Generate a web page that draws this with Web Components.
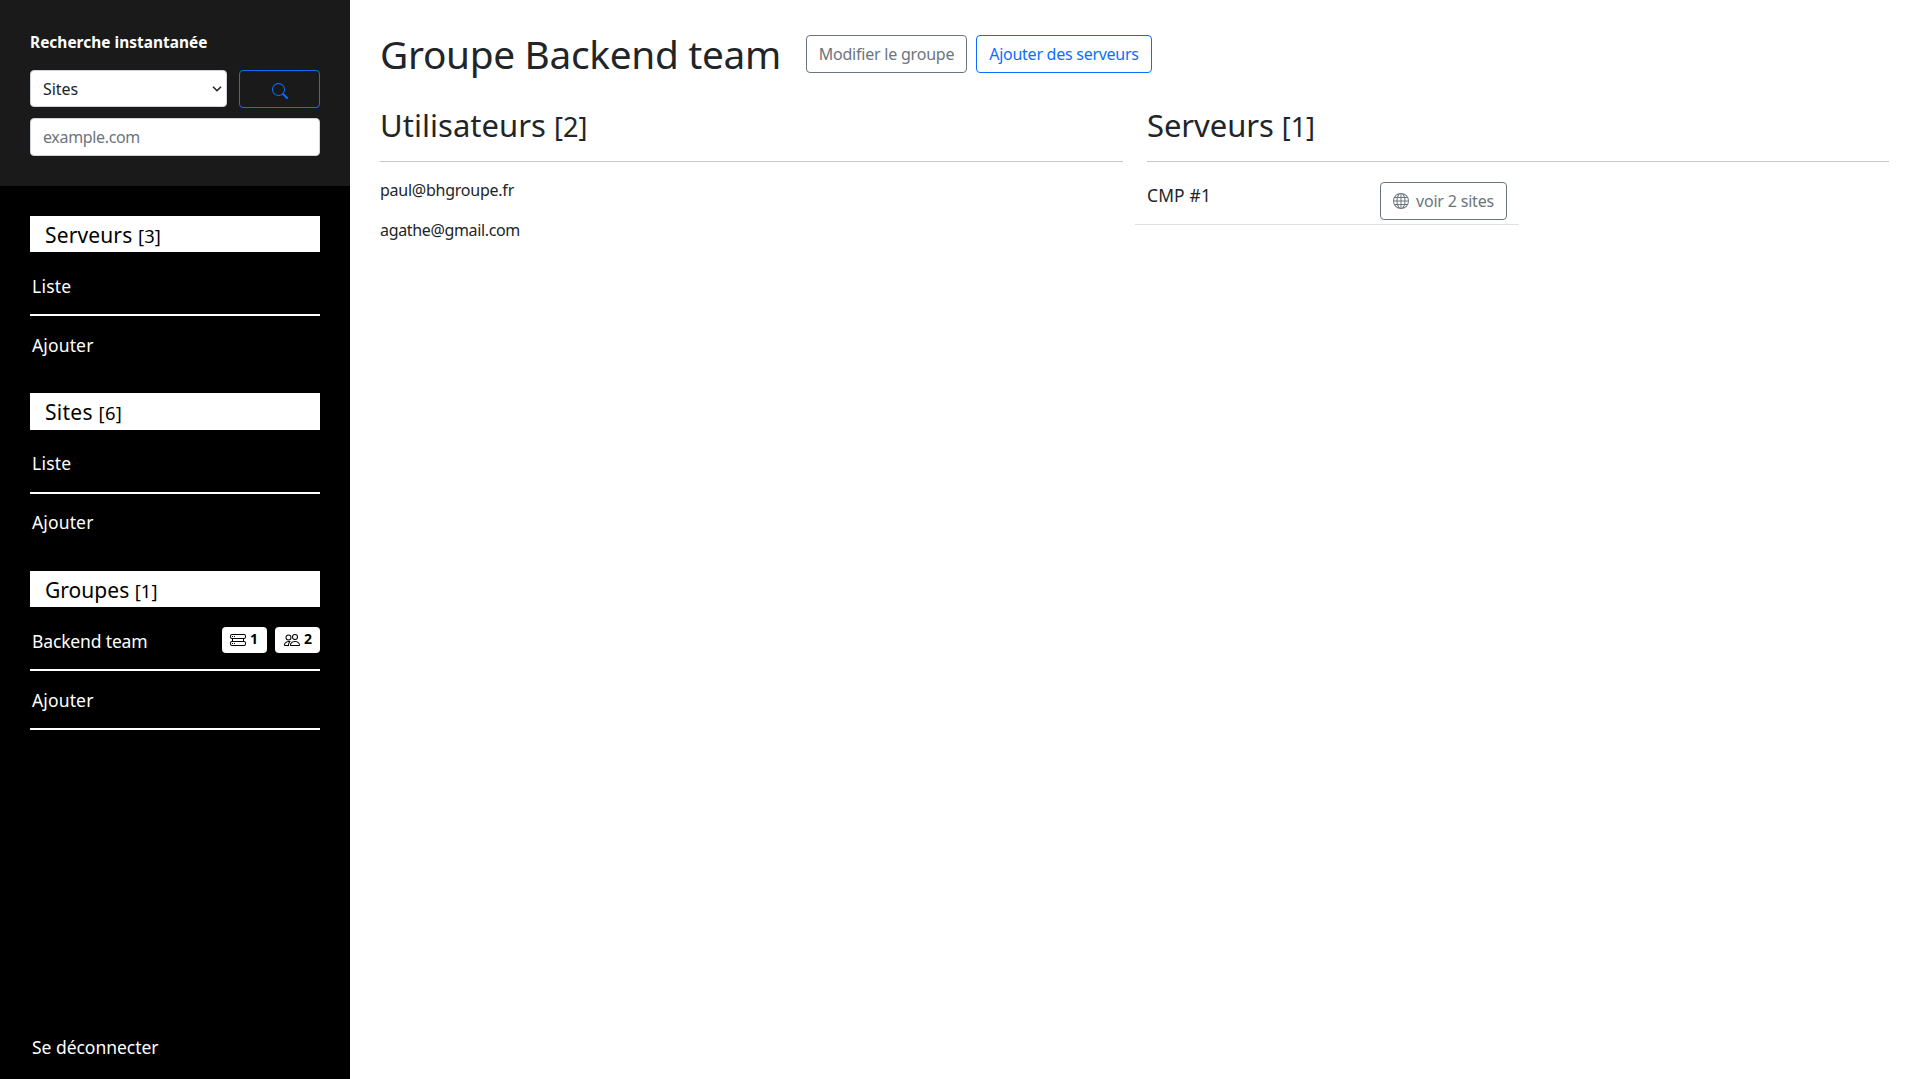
<!DOCTYPE html>
<html lang="fr">
<head>
<meta charset="utf-8">
<title>Groupe Backend team</title>
<style>
html,body{margin:0;height:100%}
body{font:16px/24px "Noto Sans","Open Sans",sans-serif;color:#212529;background:#fff;overflow:hidden}
</style>
</head>
<body>
<app-shell>
  <side-bar slot="side"></side-bar>
  <group-page></group-page>
</app-shell>
<script>
const ICONS = {
  search: '<path d="M11.742 10.344a6.5 6.5 0 1 0-1.397 1.398h-.001c.03.04.062.078.098.115l3.85 3.85a1 1 0 0 0 1.415-1.414l-3.85-3.85a1.007 1.007 0 0 0-.115-.1zM12 6.5a5.5 5.5 0 1 1-11 0 5.5 5.5 0 0 1 11 0z"/>',
  stack: '<path d="M2 2h12a2 2 0 0 1 2 2v1a2 2 0 0 1-2 2v2a2 2 0 0 1 2 2v1a2 2 0 0 1-2 2H2a2 2 0 0 1-2-2v-1a2 2 0 0 1 2-2V7a2 2 0 0 1-2-2V4a2 2 0 0 1 2-2zM2 3a1 1 0 0 0-1 1v1a1 1 0 0 0 1 1h12a1 1 0 0 0 1-1V4a1 1 0 0 0-1-1zM3 7v2h10V7zm-1 3a1 1 0 0 0-1 1v1a1 1 0 0 0 1 1h12a1 1 0 0 0 1-1v-1a1 1 0 0 0-1-1z" fill-rule="evenodd"/><path d="M2 4h1v1H2zM4 4h1v1H4zM2 11h1v1H2zM4 11h1v1H4z"/>',
  people: '<path d="M15 14s1 0 1-1-1-4-5-4-5 3-5 4 1 1 1 1h8zm-7.978-1A.261.261 0 0 1 7 12.996c.001-.264.167-1.03.76-1.72C8.312 10.629 9.282 10 11 10c1.717 0 2.687.63 3.24 1.276.593.69.758 1.457.76 1.72l-.008.002a.274.274 0 0 1-.014.002H7.022zM11 7a2 2 0 1 0 0-4 2 2 0 0 0 0 4zm3-2a3 3 0 1 1-6 0 3 3 0 0 1 6 0zM6.936 9.28a5.88 5.88 0 0 0-1.23-.247A7.35 7.35 0 0 0 5 9c-4 0-5 3-5 4 0 .667.333 1 1 1h4.216A2.238 2.238 0 0 1 5 13c0-1.01.377-2.042 1.09-2.904.243-.294.526-.569.846-.816zM4.92 10A5.493 5.493 0 0 0 4 13H1c0-.26.164-1.03.76-1.724.545-.636 1.492-1.256 3.16-1.275zM1.5 5.5a3 3 0 1 1 6 0 3 3 0 0 1-6 0zm3-2a2 2 0 1 0 0 4 2 2 0 0 0 0-4z"/>',
  globe: '<path d="M0 8a8 8 0 1 1 16 0A8 8 0 0 1 0 8zm7.5-6.923c-.67.204-1.335.82-1.887 1.855A7.97 7.97 0 0 0 5.145 4H7.5V1.077zM4.09 4a9.267 9.267 0 0 1 .64-1.539 6.7 6.7 0 0 1 .597-.933A7.025 7.025 0 0 0 2.255 4H4.09zm-.582 3.5c.03-.877.138-1.718.312-2.5H1.674a6.958 6.958 0 0 0-.656 2.5h2.49zM4.847 5a12.5 12.5 0 0 0-.338 2.5H7.5V5H4.847zM8.5 5v2.5h2.99a12.495 12.495 0 0 0-.337-2.5H8.5zM4.51 8.5a12.5 12.5 0 0 0 .337 2.5H7.5V8.5H4.51zm3.99 0V11h2.653c.187-.765.306-1.608.338-2.5H8.5zM5.145 12c.138.386.295.744.468 1.068.552 1.035 1.218 1.65 1.887 1.855V12H5.145zm.182 2.472a6.696 6.696 0 0 1-.597-.933A9.268 9.268 0 0 1 4.09 12H2.255a7.024 7.024 0 0 0 3.072 2.472zM3.82 11a13.652 13.652 0 0 1-.312-2.5h-2.49c.062.89.291 1.733.656 2.5H3.82zm6.853 3.472A7.024 7.024 0 0 0 13.745 12H11.91a9.27 9.27 0 0 1-.64 1.539 6.688 6.688 0 0 1-.597.933zM8.5 12v2.923c.67-.204 1.335-.82 1.887-1.855.173-.324.33-.682.468-1.068H8.5zm3.68-1h2.146c.365-.767.594-1.61.656-2.5h-2.49a13.65 13.65 0 0 1-.312 2.5zm2.802-3.5a6.959 6.959 0 0 0-.656-2.5H12.18c.174.782.282 1.623.312 2.5h2.49zM11.27 2.461c.247.464.462.98.64 1.539h1.835a7.024 7.024 0 0 0-3.072-2.472c.218.284.418.598.597.933zM10.855 4a7.966 7.966 0 0 0-.468-1.068C9.835 1.897 9.17 1.282 8.5 1.077V4h2.355z"/>'
};
function define(name, html) {
  const t = document.createElement('template');
  t.innerHTML = html;
  customElements.define(name, class extends HTMLElement {
    constructor() { super(); this.attachShadow({mode: 'open'}).append(t.content.cloneNode(true)); }
  });
}

define('app-shell', `<style>
:host{display:flex;height:100vh}
::slotted([slot=side]){flex:0 0 350px}
</style><slot name="side"></slot><slot></slot>`);

define('side-bar', `<style>
:host{display:flex;flex-direction:column;background:#000;color:#fff;box-sizing:border-box}
.logout{margin-top:auto;padding:0 32px 20px;font-size:17.5px;line-height:24px}
nav{padding:30px 30px 0}
nav-group + nav-group{margin-top:18px}
</style>
<search-box></search-box>
<nav>
<nav-group><text-run slot="title" w="116">Serveurs <small>[3]</small></text-run>
<nav-link><text-run w="39.5">Liste</text-run></nav-link>
<nav-link last><text-run w="61.5">Ajouter</text-run></nav-link></nav-group>
<nav-group tall><text-run slot="title" w="77">Sites <small>[6]</small></text-run>
<nav-link raised><text-run w="39.5">Liste</text-run></nav-link>
<nav-link last raised><text-run w="61.5">Ajouter</text-run></nav-link></nav-group>
<nav-group><text-run slot="title" w="112.5">Groupes <small>[1]</small></text-run>
<nav-link><text-run w="115.5">Backend team</text-run><count-badge slot="end" icon="stack">1</count-badge><count-badge slot="end" icon="people">2</count-badge></nav-link>
<nav-link><text-run w="61.5">Ajouter</text-run></nav-link></nav-group>
</nav>
<div class="logout"><text-run w="126.5">Se déconnecter</text-run></div>`);

define('search-box', `<style>
:host{display:block;box-sizing:border-box;height:186px;padding:31px 30px 30px;background:#1a1a1a}
.t{font-weight:700;font-size:15.4px;line-height:24px;margin-bottom:15px}
.row{display:flex;gap:12px;align-items:flex-start;margin-bottom:10px}
.f{box-sizing:border-box;border:1px solid #ced4da;border-radius:4px;background:#fff;color:#212529;padding:0 12px;font-size:16px;line-height:35px}
.s{width:197px;height:37px;display:flex;justify-content:space-between;padding:1px 4px 0 12px;align-items:center}
.s svg{display:block}
button{box-sizing:border-box;width:81px;height:38px;border:1px solid #0d6efd;border-radius:4px;background:none;color:#0d6efd;padding:3px 0 0;display:flex;align-items:center;justify-content:center}
.i{height:38px;color:#6c757d;line-height:36px}
</style>
<div class="t"><text-run w="177.5">Recherche instantanée</text-run></div>
<div class="row"><div class="f s" role="combobox"><text-run w="35">Sites</text-run><svg width="10" height="8" viewBox="0 0 10 8" fill="none" stroke="#212529" stroke-width="1.6"><path d="M1 1.7 5 5.7 9 1.7"/></svg></div>
<button aria-label="Rechercher"><bi-icon name="search"></bi-icon></button></div>
<div class="f i" role="textbox"><text-run w="97">example.com</text-run></div>`);

define('nav-group', `<style>
:host{display:block}
.h{box-sizing:border-box;height:36px;background:#fff;color:#000;padding:0 15px;font-size:21px;line-height:38px}
:host([tall]) .h{height:37px}
.l{padding-top:4px}
</style><div class="h"><slot name="title"></slot></div><div class="l"><slot></slot></div>`);

define('nav-link', `<style>
:host{display:flex;box-sizing:border-box;height:60px;padding:18px 0 0 2px;border-bottom:2px solid #fff;font-size:17.5px;line-height:24px;justify-content:space-between}
:host(:not(:first-of-type)){height:59px;padding-top:17px}
:host([raised]){padding-top:17px}
:host([raised]:not(:first-of-type)){padding-top:16px}
:host([last]){border-bottom-color:transparent}
.e{display:flex;gap:8px;margin-top:-2px}
</style><slot></slot><div class="e"><slot name="end"></slot></div>`);

define('group-page', `<style>
:host{display:block;flex:1;padding:30px 30px 0;box-sizing:border-box}
header{display:flex;height:48px;align-items:flex-start}
h1{margin:0;font-weight:400;font-size:38.8px;line-height:48px;width:426px}
out-button{margin:5px 9px 0 0}
.cols{display:flex;gap:24px;margin-top:29px}
section{flex:0 0 743px}
h2{margin:0;font-weight:400;font-size:31px;line-height:36px;height:55px;box-sizing:border-box;border-bottom:1px solid #c4c7c9}
section + section{flex:1}
.u{padding-top:16px;line-height:24px}
.r{display:flex;justify-content:space-between;align-items:flex-start;box-sizing:border-box;width:384px;height:45px;margin:18px 0 0 -12px;padding:0 12px;border-bottom:1px solid #dee2e6;font-size:17.4px;line-height:30px}
.r out-button{margin:2px 0 0}
</style>
<header><h1><text-run w="401">Groupe Backend team</text-run></h1>
<out-button style="width:161px"><text-run w="135.5">Modifier le groupe</text-run></out-button>
<out-button style="width:176px;color:#0d6efd"><text-run w="149.5">Ajouter des serveurs</text-run></out-button></header>
<div class="cols">
<section><h2><text-run w="207.5">Utilisateurs <small>[2]</small></text-run></h2>
<div class="u"><text-run w="134">paul@bhgroupe.fr</text-run></div>
<div class="u"><text-run w="140">agathe@gmail.com</text-run></div></section>
<section><h2><text-run w="168">Serveurs <small>[1]</small></text-run></h2>
<div class="r"><text-run w="64">CMP #1</text-run><out-button style="width:127px"><bi-icon name="globe"></bi-icon><text-run w="78">voir 2 sites</text-run></out-button></div></section>
</div>`);

define('out-button', `<style>
:host{display:flex;box-sizing:border-box;height:38px;border:1px solid currentColor;border-radius:4px;color:#6c757d;font-size:16px;line-height:36px;align-items:center;justify-content:center;gap:7px}
</style><slot></slot>`);

customElements.define('bi-icon', class extends HTMLElement {
  connectedCallback() {
    if (this.shadowRoot) return;
    this.attachShadow({mode: 'open'}).innerHTML = `<style>:host{display:block;width:16px;height:16px}svg{display:block}</style><svg width="16" height="16" viewBox="0 0 16 16" fill="currentColor">${ICONS[this.getAttribute('name')]}</svg>`;
  }
});

customElements.define('count-badge', class extends HTMLElement {
  connectedCallback() {
    if (this.shadowRoot) return;
    this.attachShadow({mode: 'open'}).innerHTML = `<style>:host{display:flex;box-sizing:border-box;width:45px;height:26px;padding:0 8px;border-radius:4px;background:#fff;color:#000;font-weight:700;font-size:14px;line-height:23px;gap:4px;align-items:flex-start}:host([icon=people]){padding-left:9px}bi-icon{margin-top:5px}</style><bi-icon name="${this.getAttribute('icon')}"></bi-icon><span><slot></slot></span>`;
  }
});

// A single line of text whose tracking is adjusted to occupy the width given in "w".
customElements.define('text-run', class extends HTMLElement {
  connectedCallback() {
    if (this.shadowRoot) return;
    this.attachShadow({mode: 'open'}).innerHTML = '<style>:host{display:inline-block;white-space:nowrap}::slotted(small){font-size:.875em}</style><slot></slot>';
    const w = parseFloat(this.getAttribute('w'));
    const natural = this.getBoundingClientRect().width;
    if (w && natural) this.style.letterSpacing = (w - natural) / this.textContent.length + 'px';
  }
});
</script>
</body>
</html>
